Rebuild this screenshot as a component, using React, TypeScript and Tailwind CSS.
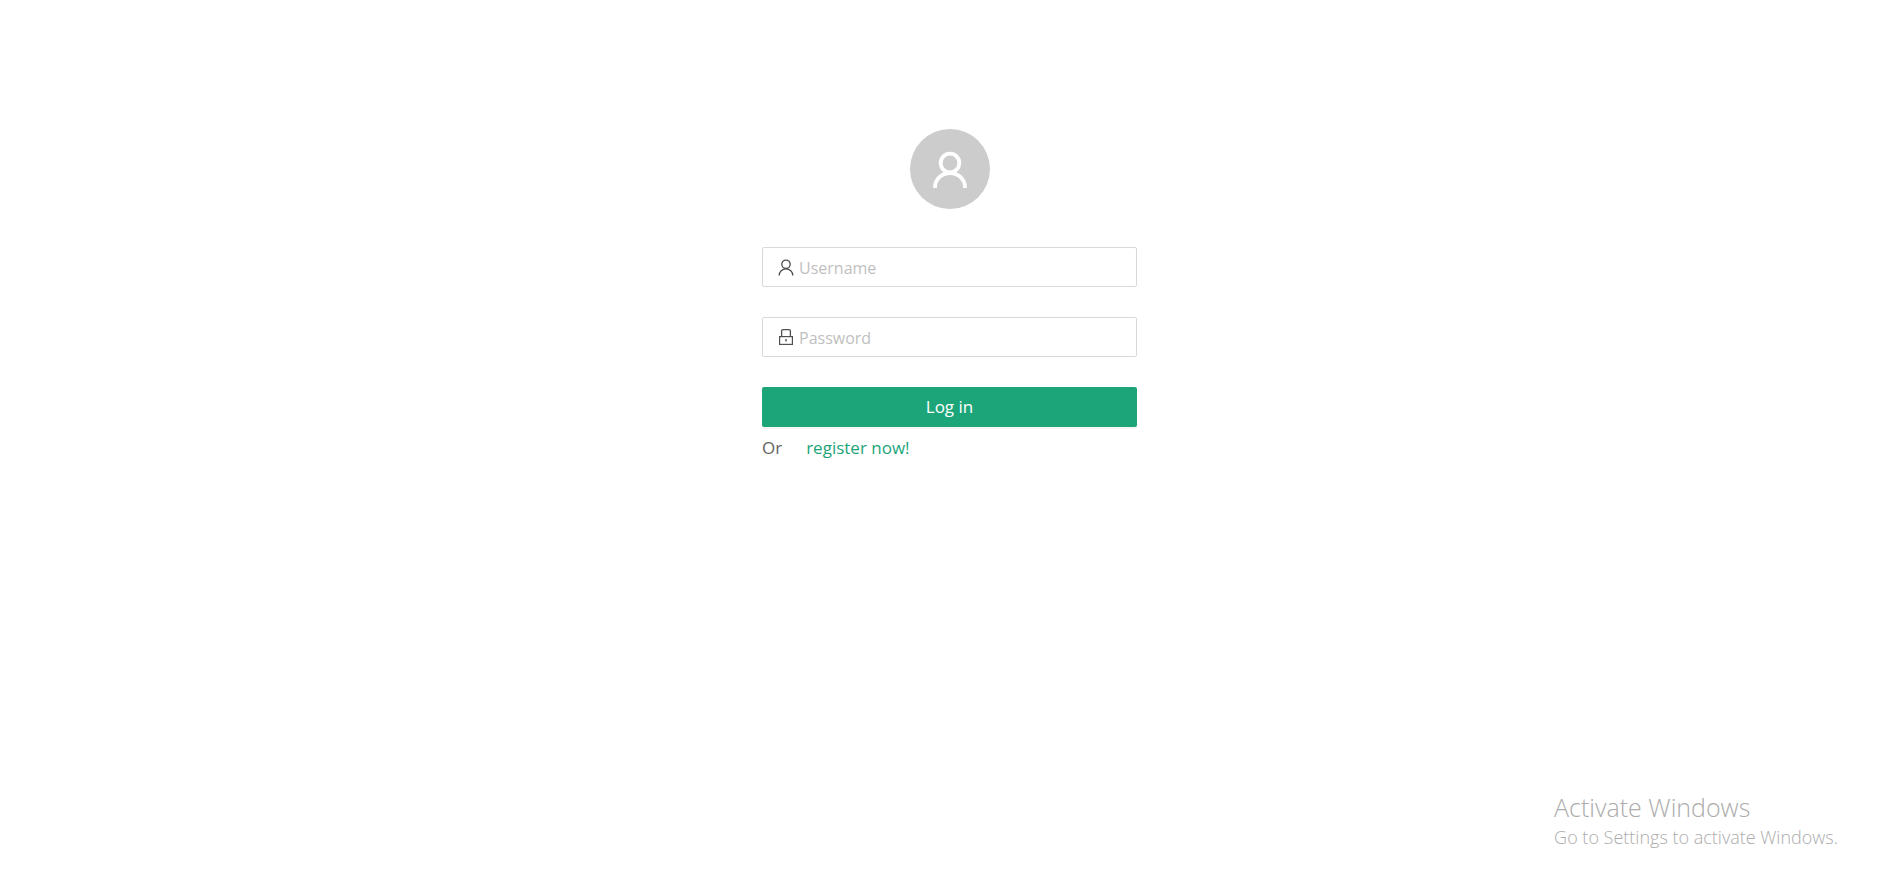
import { useState } from "react";
import type { ReactNode } from "react";

function UserIcon({ size, strokeWidth }: { size: number; strokeWidth: number }) {
  return (
    <svg width={size} height={size} viewBox="0 0 40 40" fill="none" stroke="currentColor" strokeWidth={strokeWidth} aria-hidden="true">
      <circle cx="20" cy="14" r="9.3" />
      <path d="M5 39v-.6a15 14.4 0 0 1 30 0v.6" />
    </svg>
  );
}

function LockIcon() {
  return (
    <svg width="18" height="18" viewBox="0 0 18 18" fill="none" stroke="currentColor" aria-hidden="true">
      <rect x="2.6" y="8.6" width="12.8" height="7.8" strokeWidth="1.2" />
      <path d="M4.6 8.5V3a1.4 1.4 0 0 1 1.4-1.4h6A1.4 1.4 0 0 1 13.4 3v5.5" strokeWidth="1.3" />
      <path d="M9 11v2.6" strokeWidth="1.4" />
    </svg>
  );
}

type FieldProps = {
  id: string;
  label: string;
  type: string;
  icon: ReactNode;
};

function Field({ id, label, type, icon }: FieldProps) {
  const [value, setValue] = useState("");
  return (
    <div className="mb-[30px] flex h-10 items-center gap-1 rounded-xs border border-[#d9d9d9] bg-white px-[14px] focus-within:border-[#1da57a]">
      <label htmlFor={id} aria-label={label} className="shrink-0 text-[#505050]">
        {icon}
      </label>
      <input
        id={id}
        type={type}
        placeholder={label}
        value={value}
        onChange={(e) => setValue(e.target.value)}
        className="min-w-0 flex-1 bg-transparent pt-px text-base leading-6 text-[#595959] outline-none placeholder:text-[#bfbfbf]"
      />
    </div>
  );
}

export default function App() {
  return (
    <div className="flex min-h-screen flex-col justify-between bg-white font-['Open_Sans','Noto_Sans',sans-serif] text-[17px] text-[#636363]">
      <main className="flex flex-col items-center pt-[129px] pl-[3px]">
        <div className="mb-[38px] flex size-20 items-center justify-center rounded-full bg-[#cccccc] text-white">
          <UserIcon size={40} strokeWidth={3.8} />
        </div>
        <form className="w-full max-w-[375px]" onSubmit={(e) => e.preventDefault()}>
          <Field id="username" label="Username" type="text" icon={<UserIcon size={18} strokeWidth={3} />} />
          <Field id="password" label="Password" type="password" icon={<LockIcon />} />
          <button
            type="submit"
            className="h-10 w-full cursor-pointer rounded-xs bg-[#1da57a] leading-6 text-white shadow-[0_2px_0_rgba(0,0,0,0.04)]"
          >
            Log in
          </button>
          <p className="flex gap-6 pt-[7px] leading-7">
            <span>Or</span>
            <a href="#register" className="text-[#1da57a]">
              register now!
            </a>
          </p>
        </form>
      </main>
      <aside className="self-end pr-[58px] pb-[43px] text-[#acacac]">
        <p className="text-[25px] leading-8 font-light">Activate Windows</p>
        <p className="text-lg leading-7 font-light">Go to Settings to activate Windows.</p>
      </aside>
    </div>
  );
}
